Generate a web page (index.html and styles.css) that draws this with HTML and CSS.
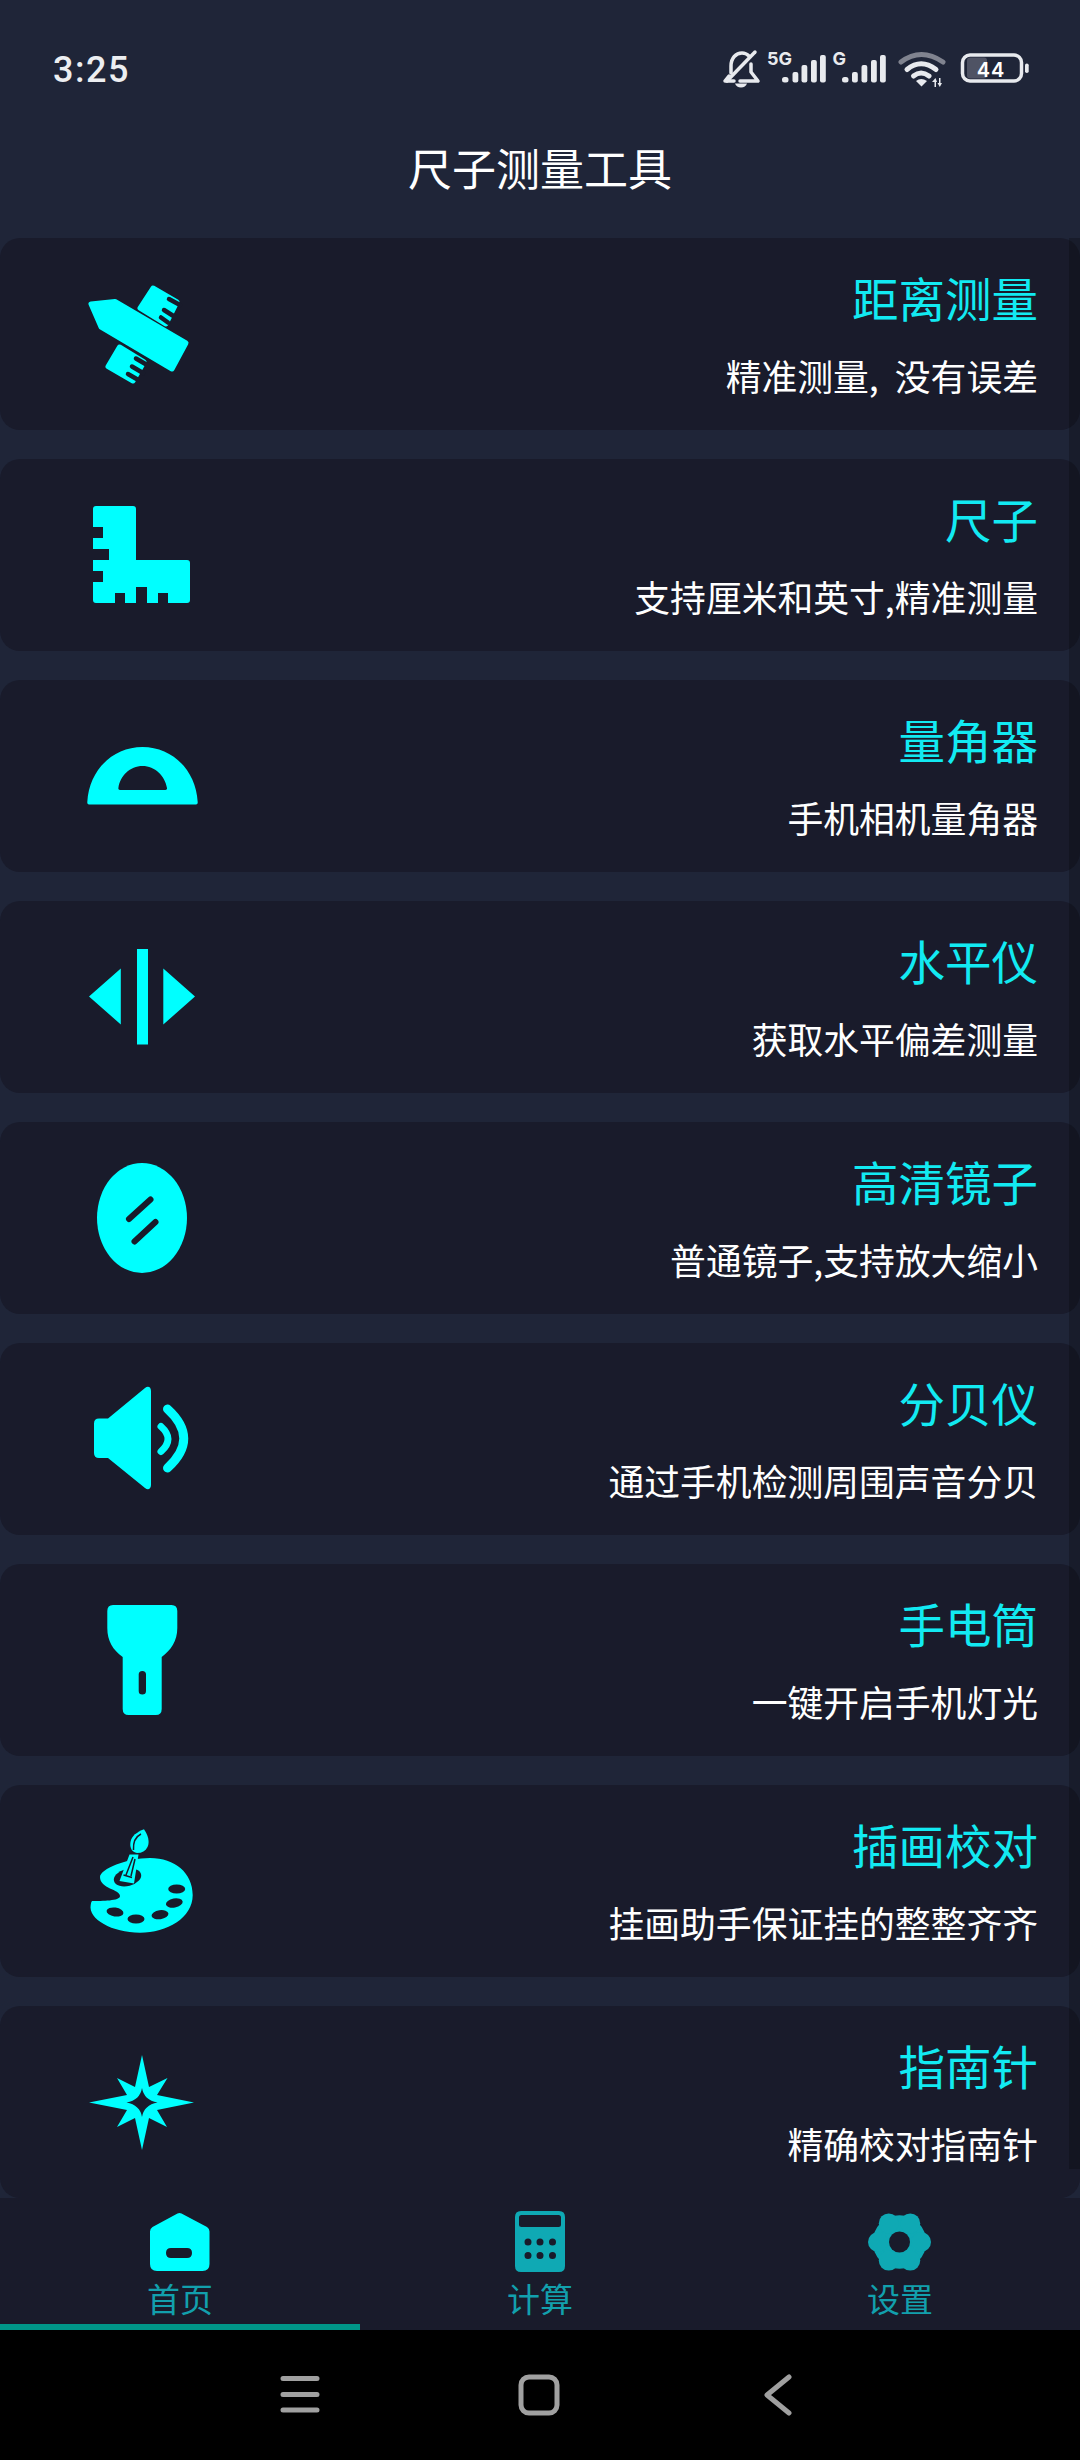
FILE: index.html
```html
<!DOCTYPE html>
<html lang="zh-CN">
<head>
<meta charset="utf-8">
<title>尺子测量工具</title>
<link rel="stylesheet" href="styles.css">
</head>
<body>
<div class="app">
  <header class="header">
    <div class="status">
      <span class="time">3:25</span>
      <svg class="status-icons" viewBox="0 0 312 50" width="312" height="50">
        <g class="st-line">
          <path d="M11 28V21C11 13 16 8 22 8C25 8 27 9 29 11M31 19V27L38 36H20M14 36H5L9 31"/>
          <path d="M7 36L35 7"/>
        </g>
        <path class="st-fill" d="M15 38.500H27C26 41 24 42.500 21 42.500S16 41 15 38.500Z"/>
        <text class="st-net" x="47" y="20">5G</text>
        <g class="st-fill">
          <rect x="62" y="32" width="6.500" height="5.500" rx="2.500"/>
          <rect x="72.500" y="27" width="5.800" height="10.500" rx="2"/>
          <rect x="81.500" y="20" width="5.800" height="17.500" rx="2"/>
          <rect x="91" y="15" width="5.800" height="22.500" rx="2"/>
          <rect x="100" y="10" width="5.800" height="27.500" rx="2"/>
        </g>
        <text class="st-net" x="112.500" y="20">G</text>
        <g class="st-fill">
          <rect x="122" y="32" width="6.500" height="5.500" rx="2.500"/>
          <rect x="132" y="27" width="5.800" height="10.500" rx="2"/>
          <rect x="141.500" y="20" width="5.800" height="17.500" rx="2"/>
          <rect x="151" y="15" width="5.800" height="22.500" rx="2"/>
          <rect x="160" y="10" width="5.800" height="27.500" rx="2"/>
        </g>
        <path class="st-wifi-dim" d="M181 17Q201 2 223 17"/>
        <g class="st-wifi">
          <path d="M187 24.500Q201 13 216 24.500"/>
          <path d="M193.500 31Q201 25 209 31"/>
        </g>
        <path class="st-fill" d="M196 36Q201 32 207 36L201.500 41.500Z"/>
        <path class="st-fill" d="M212 37L215.500 33L217 37H216V42H214.500V37ZM219 33H220.500V38H222L219.800 42L217.500 38H219Z"/>
        <rect class="st-batt" x="242.500" y="10" width="59" height="26" rx="7.500"/>
        <rect class="st-batt-level" x="247" y="12.500" width="20" height="21" rx="3"/>
        <rect class="st-fill" x="305" y="18.500" width="3.700" height="9.500" rx="1.800"/>
        <text class="st-level" x="271" y="31.500">44</text>
      </svg>
    </div>
    <h1 class="title">尺子测量工具</h1>
  </header>

  <main class="list">
    <section class="card">
      <svg class="card-icon" viewBox="0 0 120 120">
        <path class="solid" d="M9 30L33 27.500L104 69L90 95L19 53Z"/>
        <path class="solid" d="M58 34L71 14L95 28L84 50Z"/>
        <path class="solid" d="M37.500 73L62 88L51 107L26 92.500Z"/>
        <g class="cut">
          <path d="M87 25L98 31M82 36L93 43M79 43.500L86 48.500"/>
          <path d="M54 84.500L66 91.500M50 92.500L61 99M46 100L55.500 105.500"/>
        </g>
      </svg>
      <div class="card-text"><h2 class="card-title">距离测量</h2><p class="card-sub">精准测量,&nbsp;&nbsp;没有误差</p></div>
    </section>
    <section class="card">
      <svg class="card-icon" viewBox="0 0 120 120">
        <path class="flat" d="M14 11H51Q54 11 54 14V65H105Q108 65 108 68V105Q108 108 105 108H14Q11 108 11 105V87H21V76H11V65H27V54H11V43H21V32H11V14Q11 11 14 11ZM33 108H43V98H33ZM54 108H65V92H54ZM76 108H86V98H76Z" fill-rule="evenodd"/>
      </svg>
      <div class="card-text"><h2 class="card-title">尺子</h2><p class="card-sub">支持厘米和英寸,精准测量</p></div>
    </section>
    <section class="card">
      <svg class="card-icon" viewBox="0 0 120 120">
        <path class="flat" fill-rule="evenodd" d="M7 88.500Q5 88.500 5.300 86C7 54 31 31 60.500 31C90 31 114 54 115.700 86Q116 88.500 114 88.500ZM38 74Q36 74 36.400 72C38 60 48 50 60.500 50C73 50 83 60 85 72Q85.300 74 83.500 74Z"/>
      </svg>
      <div class="card-text"><h2 class="card-title">量角器</h2><p class="card-sub">手机相机量角器</p></div>
    </section>
    <section class="card">
      <svg class="card-icon" viewBox="0 0 120 120">
        <path class="flat" d="M55 12H66V107.500H55ZM7 59.500L38.800 31.500V87.500ZM113 59.500L81.300 31.500V87.500Z"/>
      </svg>
      <div class="card-text"><h2 class="card-title">水平仪</h2><p class="card-sub">获取水平偏差测量</p></div>
    </section>
    <section class="card">
      <svg class="card-icon" viewBox="0 0 120 120">
        <ellipse class="flat" cx="60" cy="60" rx="45" ry="55"/>
        <path class="cut-wide" d="M47 61L68.500 41.500M52.500 83.500L73.500 64"/>
      </svg>
      <div class="card-text"><h2 class="card-title">高清镜子</h2><p class="card-sub">普通镜子,支持放大缩小</p></div>
    </section>
    <section class="card">
      <svg class="card-icon" viewBox="0 0 120 120">
        <path class="flat" d="M17 39.500H26L63 9C66 6.500 69 8 69 12V106C69 110 66 111.500 63 109L26 79H17Q12 79 12 74V44.500Q12 39.500 17 39.500Z"/>
        <path class="arc-sm" d="M79 47.500Q93 60 79 72.500"/>
        <path class="arc-lg" d="M85.500 30Q118 59.500 85.500 89"/>
      </svg>
      <div class="card-text"><h2 class="card-title">分贝仪</h2><p class="card-sub">通过手机检测周围声音分贝</p></div>
    </section>
    <section class="card">
      <svg class="card-icon" viewBox="0 0 120 120">
        <path class="flat" fill-rule="evenodd" d="M31 5H89.500Q95.300 5 95.300 11V28C95.300 41 89 50 79.700 57V109Q79.700 115 73.700 115H46.700Q40.700 115 40.700 109V57C31 50 25.300 41 25.300 28V11Q25.300 5 31 5ZM60.300 71Q56.700 71 56.700 74.500V91Q56.700 94.500 60.300 94.500Q64 94.500 64 91V74.500Q64 71 60.300 71Z"/>
      </svg>
      <div class="card-text"><h2 class="card-title">手电筒</h2><p class="card-sub">一键开启手机灯光</p></div>
    </section>
    <section class="card">
      <svg class="card-icon" viewBox="0 0 120 120">
        <path class="flat" d="M10 80C20 80 38 80 38 75C38 68 18 68 18 56C18 48 45 37 68 37C93 37 110.700 52 110.700 74C110.700 97 85 111.700 58 111.700C30 111.700 6 98 8.700 84Q9 81 10 80Z"/>
        <g class="hole">
          <ellipse cx="94.700" cy="68" rx="8.500" ry="4.500"/>
          <ellipse cx="92.300" cy="82" rx="8.500" ry="4.500" transform="rotate(-10 92.300 82)"/>
          <ellipse cx="78" cy="93.700" rx="8.500" ry="4.500" transform="rotate(-8 78 93.700)"/>
          <ellipse cx="54" cy="98" rx="8.500" ry="4.500"/>
          <ellipse cx="33" cy="91" rx="8.500" ry="4.500" transform="rotate(8 33 91)"/>
          <ellipse cx="45.500" cy="56.500" rx="14" ry="8.500" transform="rotate(-15 45.500 56.500)"/>
        </g>
        <path class="flat" d="M37.500 60L47.500 33.500H56.500L52 62.500Z"/>
        <path class="brush-line" d="M44 54L51 36M53 38L49 55M41.500 54L50 56.500"/>
        <path class="flat" d="M62 8.300C66 14 68 21 65.500 26C63.500 30 60 32 55 32C50 31 47.500 27 48.500 21C49.500 15 55 11 62 8.300Z"/>
        <path class="brush-line" d="M59 13C53 16 51 21 51.500 29"/>
      </svg>
      <div class="card-text"><h2 class="card-title">插画校对</h2><p class="card-sub">挂画助手保证挂的整整齐齐</p></div>
    </section>
    <section class="card">
      <svg class="card-icon" viewBox="0 0 120 120">
        <path class="flat" d="M60 13L67 45L85.500 36L75 53L112 60.500L75 68L85 85L67 76L60 108L53 76L35 85L45 68L7 60.500L45 53L35 36L53 45Z"/>
        <path class="hole" d="M60 46Q62 58 75.500 60.500Q62 63 60 75Q58 63 44.500 60.500Q58 58 60 46Z"/>
      </svg>
      <div class="card-text"><h2 class="card-title">指南针</h2><p class="card-sub">精确校对指南针</p></div>
    </section>
    <div class="scrollbar"></div>
  </main>

  <nav class="tabs">
    <a class="tab tab-active">
      <svg class="tab-icon" viewBox="0 0 60 60">
        <path class="tab-on" fill-rule="evenodd" d="M27.500 1.500Q29.500 0.500 31.500 1.500L57 15Q59.500 16.500 59.500 19.500V52Q59.500 59 52.500 59H7Q0 59 0 52V19.500Q0 16.500 2.500 15ZM21 36Q16 36 16 41Q16 46 21 46H37Q42 46 42 41Q42 36 37 36Z"/>
      </svg>
      <span class="tab-label">首页</span>
    </a>
    <a class="tab">
      <svg class="tab-icon" viewBox="0 0 60 60">
        <path class="tab-off" fill-rule="evenodd" d="M11 -1H49Q55 -1 55 5V54Q55 60 49 60H11Q5 60 5 54V5Q5 -1 11 -1ZM11.500 3Q9 3 9 5.500V12.500Q9 15 11.500 15H48.500Q51 15 51 12.500V5.500Q51 3 48.500 3ZM18 26.500A3.500 3.500 0 1 0 18 33.500A3.500 3.500 0 1 0 18 26.500ZM30 26.500A3.500 3.500 0 1 0 30 33.500A3.500 3.500 0 1 0 30 26.500ZM42.500 26.500A3.500 3.500 0 1 0 42.500 33.500A3.500 3.500 0 1 0 42.500 26.500ZM18 40A3.500 3.500 0 1 0 18 47A3.500 3.500 0 1 0 18 40ZM30 40A3.500 3.500 0 1 0 30 47A3.500 3.500 0 1 0 30 40ZM42.500 40A3.500 3.500 0 1 0 42.500 47A3.500 3.500 0 1 0 42.500 40Z"/>
      </svg>
      <span class="tab-label">计算</span>
    </a>
    <a class="tab">
      <svg class="tab-icon" viewBox="0 0 60 60">
        <g class="tab-off">
          <circle cx="29.500" cy="30" r="26.800"/>
          <circle cx="40.250" cy="11.400" r="10"/>
          <circle cx="51" cy="30" r="10"/>
          <circle cx="40.250" cy="48.600" r="10"/>
          <circle cx="18.750" cy="48.600" r="10"/>
          <circle cx="8" cy="30" r="10"/>
          <circle cx="18.750" cy="11.400" r="10"/>
        </g>
        <circle class="tab-hole" cx="29.500" cy="30" r="10.500"/>
      </svg>
      <span class="tab-label">设置</span>
    </a>
  </nav>

  <footer class="sysbar">
    <svg class="sys-icon" viewBox="0 0 40 40" width="40" height="40"><path d="M3 3.500H37M3 19.500H37M3 35H37"/></svg>
    <svg class="sys-icon sys-home" viewBox="0 0 42 42" width="42" height="42"><rect x="3" y="3" width="36" height="36" rx="8"/></svg>
    <svg class="sys-icon sys-back" viewBox="0 0 28 42" width="28" height="42"><path d="M25 3L3 21L25 39"/></svg>
  </footer>
</div>
</body>
</html>
```

FILE: styles.css
```css
* { box-sizing: border-box; }
html, body { margin: 0; padding: 0; background: #000; }
body { font-family: "Noto Sans CJK SC", "Noto Sans", sans-serif; }

.app { width: 1080px; height: 2460px; display: flex; flex-direction: column; overflow: hidden; background: #1f2538; }

.header { height: 238px; flex: none; padding-top: 45px; }
.status { height: 50px; display: flex; justify-content: space-between; align-items: center; padding: 0 48px 0 53px; }
.time { font-family: Roboto, sans-serif; font-size: 36px; font-weight: 500; letter-spacing: 1.5px; line-height: 50px; color: #eceef1; }
.status-icons { display: block; flex: none; }
.st-line { fill: none; stroke: #e8eaee; stroke-width: 3.5; stroke-linecap: round; stroke-linejoin: round; }
.st-fill { fill: #e8eaee; }
.st-net { font-family: Inter, Roboto, sans-serif; font-size: 18px; font-weight: 700; fill: #e8eaee; }
.st-wifi-dim { fill: none; stroke: #80838f; stroke-width: 5; stroke-linecap: round; }
.st-wifi { fill: none; stroke: #e8eaee; stroke-width: 5; stroke-linecap: round; }
.st-batt { fill: none; stroke: #e8eaee; stroke-width: 3.5; }
.st-batt-level { fill: #4f5364; }
.st-level { font-family: Inter, Roboto, sans-serif; font-size: 20px; font-weight: 600; fill: #fff; letter-spacing: 1px; text-anchor: middle; }

.title { margin: 42px 0 0; font-size: 44px; font-weight: 400; line-height: 60px; text-align: center; color: #fff; }

.list { position: relative; height: 1960px; flex: none; display: flex; flex-direction: column; gap: 29px; }
.card { height: 192px; flex: none; background: #191b2b; border-radius: 20px; display: flex; justify-content: space-between; padding: 0 42px 0 82px; }
.card-icon { width: 120px; height: 120px; flex: none; margin-top: 36px; color: #00ffff; }
.card-text { padding-top: 27px; text-align: right; }
.card-title { margin: 0; font-size: 46.5px; font-weight: 400; line-height: 64px; color: #12eaf2; }
.card-sub { margin: 21px 0 0; font-size: 35.8px; line-height: 50px; color: #fff; }

.solid { fill: #00ffff; stroke: #00ffff; stroke-width: 5; stroke-linejoin: round; }
.flat { fill: #00ffff; }
.cut { fill: none; stroke: #191b2b; stroke-width: 4.500; stroke-linecap: round; }
.cut-wide { fill: none; stroke: #191b2b; stroke-width: 6; stroke-linecap: round; }
.hole { fill: #191b2b; }
.arc-sm { fill: none; stroke: #00ffff; stroke-width: 7; stroke-linecap: round; }
.arc-lg { fill: none; stroke: #00ffff; stroke-width: 9; stroke-linecap: round; }
.brush-line { fill: none; stroke: #191b2b; stroke-width: 1.500; }

.scrollbar { position: absolute; top: 0; right: 0; width: 11px; height: 1931px; background: rgba(0, 0, 0, 0.22); }

.tabs { height: 132px; flex: none; display: grid; grid-template-columns: repeat(3, 1fr); background: #191b2b; }
.tab { display: flex; flex-direction: column; align-items: center; padding-top: 14px; }
.tab-active { border-bottom: 6px solid #009688; }
.tab-icon { width: 60px; height: 60px; display: block; overflow: visible; }
.tab-on { fill: #00ffff; }
.tab-off { fill: #0fa9b4; }
.tab-hole { fill: #191b2b; }
.tab-label { margin-top: 4px; font-size: 33px; line-height: 44px; color: #12a0ad; }

.sysbar { height: 130px; flex: none; background: #000; display: flex; align-items: center; padding-left: 280px; }
.sys-icon { display: block; fill: none; stroke: #a0a0a0; stroke-width: 5; stroke-linecap: round; stroke-linejoin: round; }
.sys-home { margin-left: 198px; }
.sys-back { margin-left: 204px; }
```
